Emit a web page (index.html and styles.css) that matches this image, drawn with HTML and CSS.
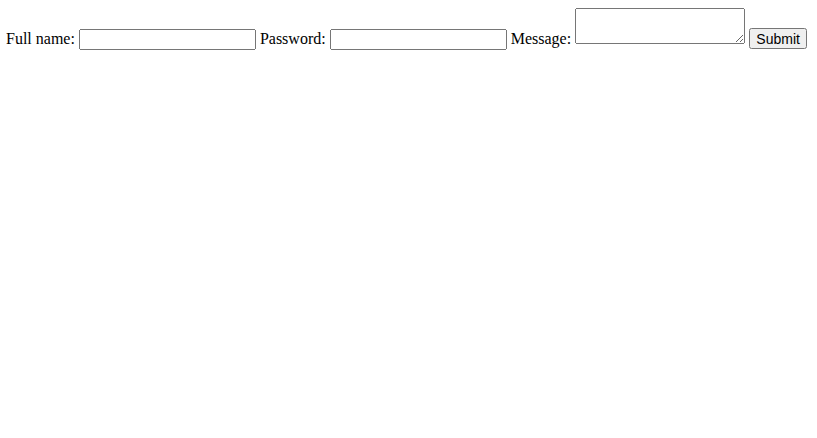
FILE: index.html
```html
<!DOCTYPE html>
<html>
<head>
<meta charset="utf-8">
<link rel="stylesheet" href="styles.css">
</head>
<body class="page">
<form class="form">
<label for="name">Full name:</label> <input class="field" type="text" id="name" name="name">
<label for="pw">Password:</label> <input class="field" type="password" id="pw" name="pw">
<label for="msg">Message:</label> <textarea class="area" id="msg" name="msg"></textarea>
<input class="btn" type="submit" value="Submit">
</form>
</body>
</html>
```
FILE: styles.css
```css
.page {
  margin: 8px 6px;
  font-family: "Liberation Serif", serif;
  font-size: 16px;
}
.form {
  white-space: nowrap;
}
.field {
  box-sizing: border-box;
  width: 177px;
  height: 21px;
  font-family: "Liberation Sans", sans-serif;
}
.area {
  box-sizing: border-box;
  width: 170px;
  height: 36px;
  font-family: "Liberation Mono", monospace;
}
.btn {
  box-sizing: border-box;
  width: 58px;
  height: 21px;
  padding: 1px 4px;
  font-family: "Liberation Sans", sans-serif;
  font-size: 14px;
}
```
